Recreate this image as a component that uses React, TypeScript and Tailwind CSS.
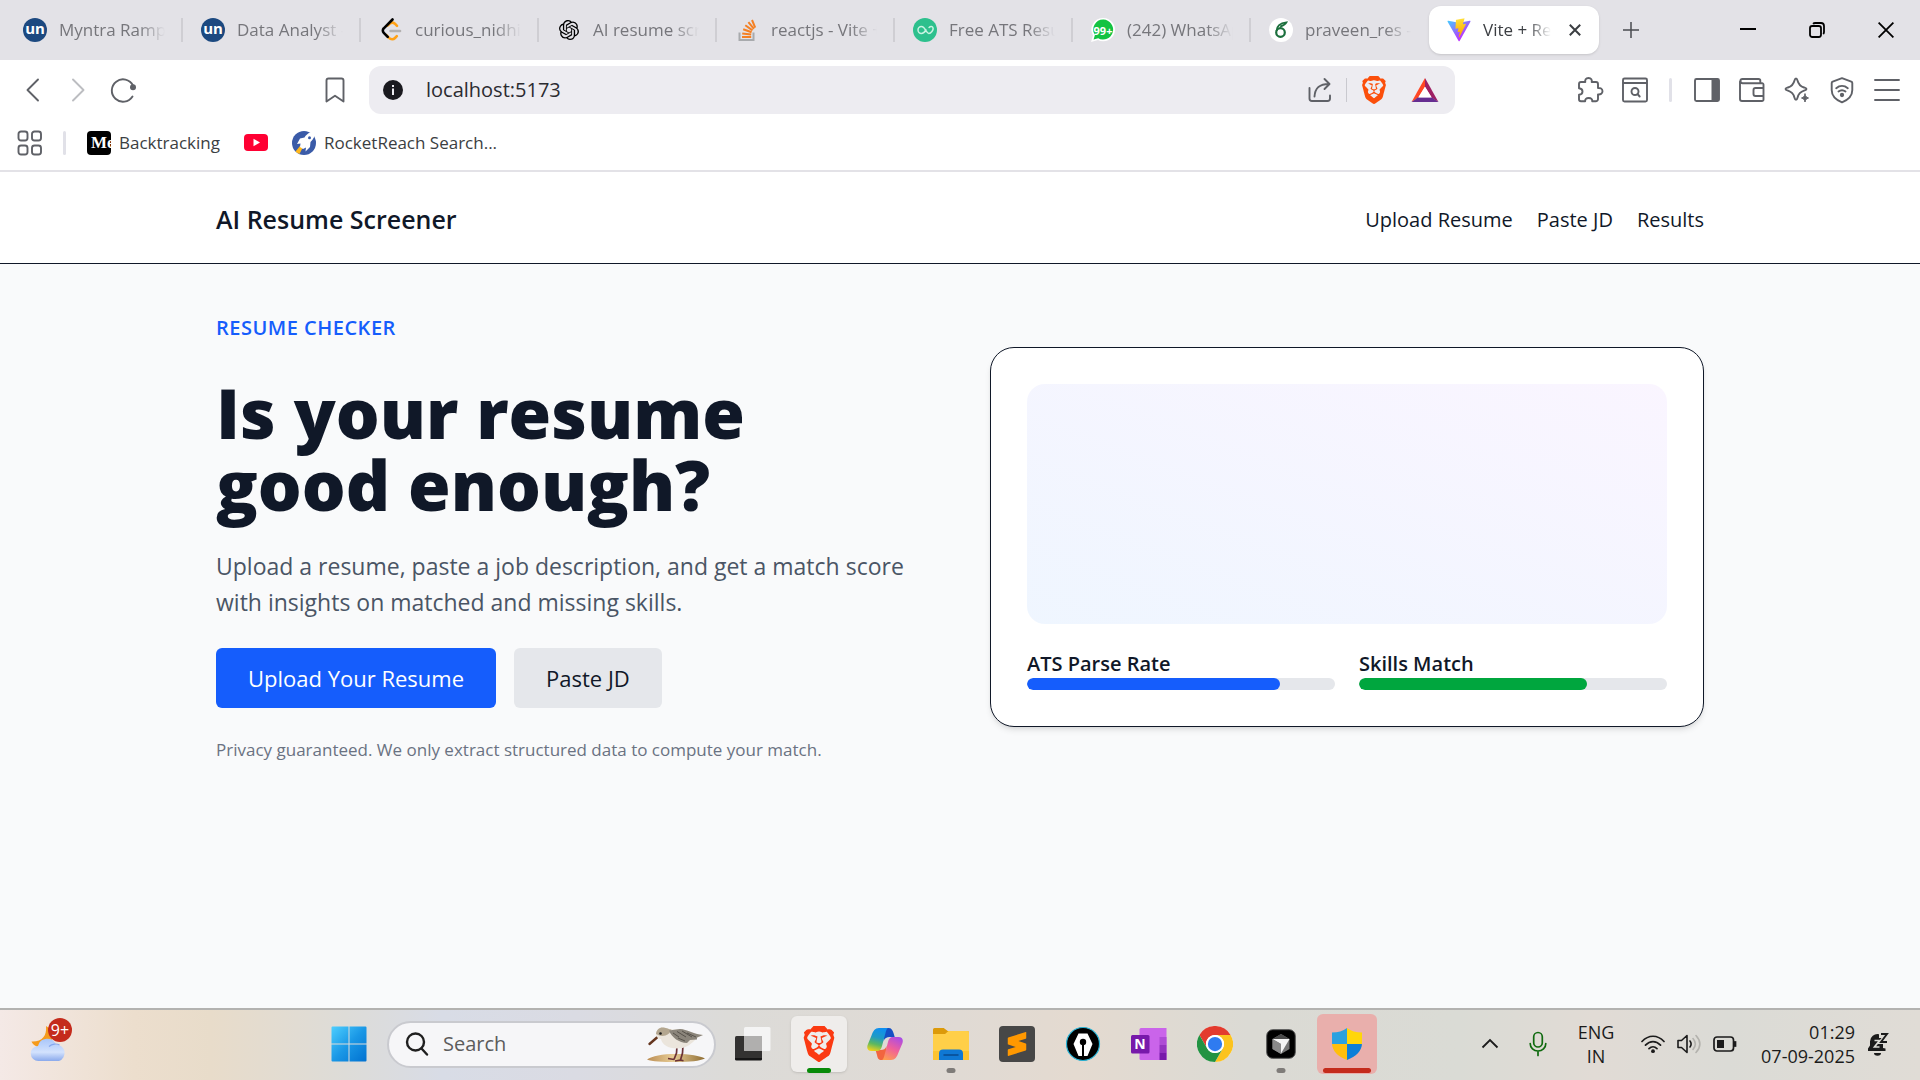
import type { ReactNode } from "react";
import { SiBrave, SiOpenai, SiSublimetext } from "react-icons/si";

/* ---------- favicons ---------- */

const UnIcon = () => (
  <span className="flex size-6 items-center justify-center rounded-full bg-[#1c4980] pb-1 text-[15px] leading-none font-bold text-white">
    un
  </span>
);

const LeetIcon = () => (
  <svg viewBox="0 0 24 24" className="size-6" fill="none" strokeLinecap="round" strokeLinejoin="round">
    <path d="M7.4 17.2l2.6 2.7c1.8 1.7 4.4 1.7 6 .1l1.8-1.8" stroke="#ffa116" strokeWidth="2.6" />
    <path d="M8.6 7.6l2-1.9c1.6-1.2 3.8-1.2 5.300 0l2.100 2.100" stroke="#ffa116" strokeWidth="2.6" />
    <path d="M13.500 1.500L4.800 10.300a3.200 3.200 0 0 0 0 4.600l3.900 4" stroke="#000" strokeWidth="2.600" />
    <path d="M11.500 13h9.500" stroke="#b3b1b0" strokeWidth="2.600" />
  </svg>
);

const StackIcon = () => (
  <svg viewBox="0 0 24 24" className="size-6" fill="none">
    <path d="M4.500 14.500v7.500h14v-7.500" stroke="#a8aaad" strokeWidth="2" />
    <g stroke="#f48024" strokeWidth="2">
      <path d="M7 19h9.200M7.200 15.400l9 1.200M8.200 11.300l8.400 3M10.300 7.300l7.200 5.100M13.400 4.200l5.500 6.600M17 2l3.200 7.600" />
    </g>
  </svg>
);

const EnhancvIcon = () => (
  <svg viewBox="0 0 24 24" className="size-6" fill="none">
    <circle cx="12" cy="12" r="12" fill="#2dc08d" />
    <path
      d="M13 12c-1.200 2-2.400 3.400-4.600 3.400a3.400 3.400 0 0 1 0-6.800c4 0 4.600 6.800 7.400 6.800 2.200 0 4.700-3.400 4.300-5.300-.4-1.800-2.600-2-4-.6"
      stroke="#c9f3e2"
      strokeWidth="1.500"
      strokeLinecap="round"
    />
  </svg>
);

const WhatsIcon = () => (
  <span className="relative flex size-6 items-center justify-center text-[11px] leading-none font-bold text-white">
    <svg viewBox="0 0 24 24" className="absolute inset-0 size-6">
      <path d="M12.400 0a11.600 11.600 0 1 1-5.400 21.900L0 24l2-6.600A11.600 11.600 0 0 1 12.400 0z" fill="#fff" />
      <path d="M12.400 1.600a10 10 0 1 1-5.200 18.700L2.600 21.500l1.300-4.400A10 10 0 0 1 12.400 1.600z" fill="#13c342" />
    </svg>
    <span className="relative">99+</span>
  </span>
);

const OverleafIcon = () => (
  <svg viewBox="0 0 24 24" className="size-6" fill="none">
    <circle cx="12" cy="12" r="12" fill="#fff" />
    <circle cx="11.500" cy="14.500" r="4.300" stroke="#1b6f3d" strokeWidth="2.200" />
    <path d="M7.600 13c.2-5 4-8 9.800-8.600-1 2.200-3.400 3.200-6.200 4.200" stroke="#1b6f3d" strokeWidth="1.900" />
  </svg>
);

const ViteIcon = () => (
  <svg viewBox="0 0 410 404" className="size-6">
    <defs>
      <linearGradient id="viteBody" x1="6" y1="33" x2="235" y2="344" gradientUnits="userSpaceOnUse">
        <stop stopColor="#41D1FF" />
        <stop offset="1" stopColor="#BD34FE" />
      </linearGradient>
      <linearGradient id="viteBolt" x1="194" y1="9" x2="236" y2="293" gradientUnits="userSpaceOnUse">
        <stop stopColor="#FFEA83" />
        <stop offset=".08" stopColor="#FFDD35" />
        <stop offset="1" stopColor="#FFA800" />
      </linearGradient>
    </defs>
    <path
      fill="url(#viteBody)"
      d="M399.641 59.525L215.643 388.545c-3.799 6.793-13.559 6.833-17.415.073L10.582 59.556C6.380 52.190 12.680 43.267 21.028 44.759l184.195 32.924c1.175.21 2.378.208 3.553-.006l180.343-32.870c8.320-1.517 14.649 7.337 10.522 14.719z"
    />
    <path
      fill="url(#viteBolt)"
      d="M292.965 1.574L156.801 28.255a5 5 0 0 0-4.030 4.611l-8.376 141.464c-.197 3.332 2.863 5.918 6.115 5.168l37.910-8.749c3.547-.818 6.752 2.306 6.023 5.873l-11.263 55.153c-.758 3.712 2.727 6.886 6.352 5.785l23.415-7.114c3.630-1.102 7.118 2.081 6.350 5.796l-17.899 86.633c-1.120 5.419 6.088 8.374 9.094 3.728l2.008-3.103 110.954-221.428c1.858-3.707-1.346-7.935-5.418-7.150l-39.022 7.532c-3.667.707-6.787-2.708-5.752-6.296l25.469-88.291c1.036-3.594-2.095-7.012-5.766-6.293z"
    />
  </svg>
);

const tabs: { title: string; icon: ReactNode }[] = [
  { title: "Myntra Ramp Up", icon: <UnIcon /> },
  { title: "Data Analyst - U", icon: <UnIcon /> },
  { title: "curious_nidhi - L", icon: <LeetIcon /> },
  { title: "AI resume screen", icon: <SiOpenai className="size-5 text-black" /> },
  { title: "reactjs - Vite + R", icon: <StackIcon /> },
  { title: "Free ATS Resume", icon: <EnhancvIcon /> },
  { title: "(242) WhatsApp", icon: <WhatsIcon /> },
  { title: "praveen_res - O", icon: <OverleafIcon /> },
];

function TabStrip() {
  return (
    <div className="flex h-[60px] items-center bg-[#e3e2e7] pl-[5px]">
      <div role="tablist" className="flex min-w-0 items-center">
        {tabs.map((t, i) => (
          <button
            key={t.title}
            role="tab"
            aria-selected={false}
            className={
              "flex h-6 w-[178px] items-center gap-3 border-r-2 pr-4 pl-[18px] " +
              (i === tabs.length - 1 ? "border-transparent" : "border-[#cfced3]")
            }
          >
            <span className="flex size-6 shrink-0 items-center justify-center">{t.icon}</span>
            <span className="min-w-0 flex-1 overflow-hidden text-left text-[17px] whitespace-nowrap text-[#76767b] [mask-image:linear-gradient(to_right,black_75%,transparent)]">
              {t.title}
            </span>
          </button>
        ))}
        <div className="flex h-12 w-[170px] items-center rounded-xl bg-white pr-3 pl-[18px] shadow-sm">
          <button role="tab" aria-selected className="flex min-w-0 flex-1 items-center gap-3">
            <ViteIcon />
            <span className="w-[68px] overflow-hidden text-left text-[17px] whitespace-nowrap text-[#3b3e42] [mask-image:linear-gradient(to_right,black_65%,transparent)]">
              Vite + React
            </span>
          </button>
          <button aria-label="Close tab" className="flex size-6 items-center justify-center">
            <svg viewBox="0 0 12 12" className="size-3" stroke="#3b3e42" strokeWidth="2">
              <path d="M.8.8l10.400 10.400M11.200.8L.8 11.200" />
            </svg>
          </button>
        </div>
      </div>
      <button aria-label="New tab" className="ml-5 flex size-6 items-center justify-center">
        <svg viewBox="0 0 16 16" className="size-4" stroke="#4a4b50" strokeWidth="1.500">
          <path d="M8 0v16M0 8h16" />
        </svg>
      </button>
      <div className="ml-auto flex">
        <button aria-label="Minimize" className="flex h-12 w-[69px] items-center justify-center">
          <svg viewBox="0 0 16 16" className="size-4" stroke="#000" strokeWidth="2">
            <path d="M0 7h16" />
          </svg>
        </button>
        <button aria-label="Restore" className="flex h-12 w-[69px] items-center justify-center">
          <svg viewBox="0 0 16 16" className="size-4" fill="none" stroke="#000" strokeWidth="1.800">
            <rect x="1" y="4" width="11" height="11" rx="2.200" />
            <path d="M4 1.800C4.600 1.200 5.400 1 6.200 1H12a3 3 0 0 1 3 3v6c0 .8-.3 1.500-.8 2" />
          </svg>
        </button>
        <button aria-label="Close" className="flex h-12 w-[69px] items-center justify-center">
          <svg viewBox="0 0 16 16" className="size-4" stroke="#000" strokeWidth="1.800">
            <path d="M.6.6l14.800 14.800M15.400.6L.6 15.400" />
          </svg>
        </button>
      </div>
    </div>
  );
}

/* ---------- toolbar ---------- */

function ToolButton({ label, children }: { label: string; children: ReactNode }) {
  return (
    <button aria-label={label} className="flex h-10 w-[45px] items-center justify-center text-[#5f6167]">
      <svg viewBox="0 0 28 28" className="size-7" fill="none" stroke="currentColor" strokeWidth="1.900" strokeLinecap="round" strokeLinejoin="round">
        {children}
      </svg>
    </button>
  );
}

function Toolbar() {
  return (
    <div className="flex h-[60px] items-center bg-white pl-[10px]">
      <ToolButton label="Back">
        <path d="M19 3.500L8.500 14 19 24.500" />
      </ToolButton>
      <button aria-label="Forward" className="flex h-10 w-[45px] items-center justify-center text-[#bcbdc1]">
        <svg viewBox="0 0 28 28" className="size-7" fill="none" stroke="currentColor" strokeWidth="1.900" strokeLinecap="round" strokeLinejoin="round">
          <path d="M9 3.500L19.500 14 9 24.500" />
        </svg>
      </button>
      <ToolButton label="Reload">
        <path d="M24 9.500A11.200 11.200 0 1 0 23.500 20.500" />
        <circle cx="24" cy="11.200" r="3" fill="currentColor" stroke="none" />
      </ToolButton>
      <div className="flex min-w-0 flex-1 items-center justify-end gap-3">
        <ToolButton label="Bookmark this page">
          <path d="M5.500 4.500a2 2 0 0 1 2-2h13a2 2 0 0 1 2 2v21L14 19.800 5.500 25.500z" />
        </ToolButton>
        <div className="flex h-12 w-[1086px] min-w-0 items-center rounded-xl bg-[#edecf1] pr-0.5 pl-[14px]">
          <button aria-label="Site information">
            <svg viewBox="0 0 20 20" className="size-5">
              <circle cx="10" cy="10" r="10" fill="#1a1a1f" />
              <path d="M9 8.500h2V15H9zM9 5h2v2H9z" fill="#edecf1" />
            </svg>
          </button>
          <input
            aria-label="Address"
            defaultValue="localhost:5173"
            className="ml-[23px] min-w-0 flex-1 bg-transparent text-[20px] text-[#2b2b30] outline-none"
          />
          <ToolButton label="Share">
            <path d="M3.500 12v10.500a2.500 2.500 0 0 0 2.500 2.500h15.500a2.500 2.500 0 0 0 2.500-2.500v-3M8.500 20.500c.5-8 4-12.500 14.500-12.500M18.500 3l5 5-5 5" />
          </ToolButton>
          <span className="mx-1 h-6 w-px bg-[#c9c9cf]" />
          <button aria-label="Brave Shields" className="flex h-10 w-[46px] items-center justify-center">
            <SiBrave className="size-7 text-[#fb4f0b]" />
          </button>
          <button aria-label="Brave Rewards" className="flex h-10 w-[56px] items-center justify-center">
            <svg viewBox="0 0 28 25" className="h-6 w-7">
              <path d="M14 0L0 25l7-4.500L14 9z" fill="#ff4724" />
              <path d="M14 0l14 25-7-4.500L14 9z" fill="#9e1f63" />
              <path d="M0 25h28l-7-5H7z" fill="#662d91" />
              <path d="M14 9l7 11.200H7z" fill="#fff" />
            </svg>
          </button>
        </div>
      </div>
      <div className="ml-28 flex items-center pr-[11px]">
        <ToolButton label="Extensions">
          <path d="M3 8a2 2 0 0 1 2-2h4.300c-.5-1.900.4-4 3.200-4s3.700 2.100 3.200 4H20a2 2 0 0 1 2 2v4c2.300-.2 4.500.6 4.500 3.200s-2.200 3.500-4.500 3.200V23a2.200 2.200 0 0 1-2.200 2.200h-3.600c.2-1.900-.9-3.200-3.500-3.200s-3.700 1.300-3.500 3.200H5a2 2 0 0 1-2-2v-4.400c2.200-.2 3.500-1.500 3.500-3.300S5.200 12.400 3 12.200z" />
        </ToolButton>
        <ToolButton label="Search tabs">
          <rect x="2" y="2.500" width="24" height="23" rx="1.500" />
          <path d="M2.500 7h23" />
          <circle cx="14" cy="15.500" r="3.500" />
          <path d="M16.500 18l2.200 2.500" />
        </ToolButton>
        <span className="mx-3 h-6 w-[3px] rounded bg-[#e1e1e8]" />
        <ToolButton label="Sidebar">
          <rect x="2" y="3" width="24" height="22" rx="1.500" />
          <path d="M18.500 3h7.500v22h-7.500z" fill="currentColor" stroke="none" />
        </ToolButton>
        <ToolButton label="Wallet">
          <path d="M2 5.500v17.500A2 2 0 0 0 4 25H24a1.500 1.500 0 0 0 1.500-1.500V9A1.500 1.500 0 0 0 24 7.200H4.500A2.100 2.100 0 0 1 4.500 3H20.500a1.800 1.800 0 0 1 1.800 1.800v2.400M25.500 12h-8a2 2 0 0 0-2 2v4a2 2 0 0 0 2 2h8" />
        </ToolButton>
        <ToolButton label="Leo AI">
          <path d="M13 2.500c1 0 1.200.8 1.500 2 1 4 2.600 5.800 6.500 7 1.400.5 2.500.7 2.500 1.600s-1.100 1.200-2.500 1.600c-3.900 1.200-5.500 3-6.500 7-.3 1.200-.5 2-1.500 2s-1.200-.8-1.500-2c-1-4-2.600-5.800-6.500-7C3.600 14.300 2.500 14 2.500 13.100s1.100-1.100 2.500-1.600c3.900-1.200 5.500-3 6.500-7 .3-1.200.5-2 1.500-2z" />
          <path d="M22 18c.6 2.500 1.200 3.200 3.500 4-2.300.8-2.900 1.500-3.500 4-.6-2.500-1.200-3.200-3.500-4 2.300-.8 2.900-1.500 3.500-4z" fill="currentColor" strokeWidth="1" />
        </ToolButton>
        <ToolButton label="VPN">
          <path d="M14 2.200l9.300 3.400a1.500 1.500 0 0 1 1 1.400v7c0 6-4 9.800-10.300 12.300C7.700 23.800 3.700 20 3.700 14V7a1.500 1.500 0 0 1 1-1.400z" />
          <path d="M8.200 12.200c3.500-3 8.100-3 11.600 0M10.500 15.500c2.300-1.700 4.700-1.700 7 0" />
          <circle cx="14" cy="19" r="1.200" fill="currentColor" />
        </ToolButton>
        <ToolButton label="Menu">
          <path d="M2 4h24M2 14h24M2 24h24" />
        </ToolButton>
      </div>
    </div>
  );
}

function Bookmarks() {
  return (
    <nav aria-label="Bookmarks" className="flex h-[52px] items-center border-b-2 border-[#e3e2e7] bg-white pb-[5px] pl-[17px] text-[17px] text-[#3b3e42]">
      <button aria-label="Apps">
        <svg viewBox="0 0 26 26" className="size-[26px]" fill="none" stroke="#5f6167" strokeWidth="1.900">
          <rect x="1.500" y="1.500" width="9" height="9" rx="2.500" />
          <rect x="15" y="1.500" width="9" height="9" rx="2.500" />
          <rect x="1.500" y="15.500" width="9" height="9" rx="2.500" />
          <rect x="15" y="15.500" width="9" height="9" rx="2.500" />
        </svg>
      </button>
      <span className="mr-[21px] ml-5 h-6 w-[3px] rounded bg-[#e1e1e8]" />
      <a href="#backtracking" className="flex items-center gap-2">
        <span className="flex size-6 items-center overflow-hidden rounded bg-black pl-1 font-['Liberation_Serif',serif] text-[17px] font-bold text-white">
          Me
        </span>
        Backtracking
      </a>
      <a href="#youtube" aria-label="YouTube" className="ml-6">
        <svg viewBox="0 0 24 17" className="h-[17px] w-6">
          <rect width="24" height="17" rx="4" fill="#ff0033" />
          <path d="M9.500 4.800l6.500 3.700-6.500 3.700z" fill="#fff" />
        </svg>
      </a>
      <a href="#rocketreach" className="ml-6 flex items-center gap-2">
        <svg viewBox="0 0 24 24" className="size-6">
          <circle cx="12" cy="12" r="12" fill="#3a5ba8" />
          <path d="M3.500 20.500L8 15l2.500 2L7.500 23A12 12 0 0 1 3.500 20.500z" fill="#ffb81c" />
          <path d="M23.500.5c-5.500.2-8.500 2-11 6L8 7.500 5 13l3.500-.5L8 16l3 2 3-1.500-.5 4L18 16l.5-5c3-3 4.800-6.500 5-10.500z" fill="#fff" />
          <circle cx="17.500" cy="6.800" r="1.500" fill="#3a5ba8" />
        </svg>
        RocketReach Search...
      </a>
    </nav>
  );
}

/* ---------- page ---------- */

function Meter({ label, value, tone }: { label: string; value: number; tone: string }) {
  return (
    <div>
      <p className="text-[20px] leading-7 font-semibold">{label}</p>
      <div
        role="progressbar"
        aria-label={label}
        aria-valuenow={value}
        aria-valuemin={0}
        aria-valuemax={100}
        className="h-3 overflow-hidden rounded-full bg-gray-200"
      >
        <div className={"h-3 rounded-full " + tone} style={{ width: `${value}%` }} />
      </div>
    </div>
  );
}

function Page() {
  return (
    <div className="flex-1 bg-gray-50 text-gray-900">
      <header className="border-b border-gray-900 bg-white">
        <div className="mx-auto flex h-[91px] max-w-[1536px] items-center justify-between px-6 pt-1">
          <a href="#home" className="text-[25px] font-semibold">
            AI Resume Screener
          </a>
          <nav aria-label="Main" className="flex gap-6 text-[20px]">
            <a href="#upload">Upload Resume</a>
            <a href="#jd">Paste JD</a>
            <a href="#results">Results</a>
          </nav>
        </div>
      </header>
      <main className="mx-auto grid max-w-[1536px] grid-cols-2 items-center gap-[60px] px-6 py-12">
        <section>
          <p className="mb-8 text-[20px] leading-8 font-semibold tracking-wide text-[#155dfc]">RESUME CHECKER</p>
          <h1 className="mb-7 text-[69px] leading-[72px] font-extrabold">
            Is your resume
            <br />
            good enough?
          </h1>
          <p className="mb-7 text-[23px] leading-9 text-gray-600">
            Upload a resume, paste a job description, and get a match score with insights on matched and missing skills.
          </p>
          <div className="mb-[30px] flex gap-[18px]">
            <button className="h-[60px] rounded-md bg-[#155dfc] px-8 text-[22px] text-white">
              Upload Your Resume
            </button>
            <button className="h-[60px] rounded-md bg-gray-200 px-8 text-[22px]">Paste JD</button>
          </div>
          <p className="text-[17px] leading-6 text-gray-500">
            Privacy guaranteed. We only extract structured data to compute your match.
          </p>
        </section>
        <section className="rounded-3xl border border-gray-900 bg-white p-9 shadow-md">
          <div className="h-60 rounded-[18px] bg-gradient-to-tr from-blue-50 to-purple-50" />
          <div className="mt-[26px] grid grid-cols-2 gap-6">
            <Meter label="ATS Parse Rate" value={82} tone="bg-[#155dfc]" />
            <Meter label="Skills Match" value={74} tone="bg-[#00a63e]" />
          </div>
        </section>
      </main>
    </div>
  );
}

/* ---------- taskbar ---------- */

const WindowsIcon = () => (
  <svg viewBox="0 0 36 36" className="size-9">
    <defs>
      <linearGradient id="win" x1="0" y1="0" x2="36" y2="36" gradientUnits="userSpaceOnUse">
        <stop stopColor="#4fd0ff" />
        <stop offset=".5" stopColor="#1a98e6" />
        <stop offset="1" stopColor="#0070d0" />
      </linearGradient>
    </defs>
    <path
      fill="url(#win)"
      d="M1.500.5h16v17H.5v-16a1 1 0 0 1 1-1zM18.500.5h16a1 1 0 0 1 1 1v16h-17zM.5 18.500h17v17h-16a1 1 0 0 1-1-1zM18.500 18.500h17v16a1 1 0 0 1-1 1h-16z"
    />
  </svg>
);

const WeatherIcon = () => (
  <svg viewBox="0 0 38 38" className="size-[38px]">
    <defs>
      <linearGradient id="cloud" x1="0" y1="14" x2="0" y2="36" gradientUnits="userSpaceOnUse">
        <stop stopColor="#a9c6fa" />
        <stop offset=".6" stopColor="#d3e2fd" />
        <stop offset="1" stopColor="#8aa9ec" />
      </linearGradient>
    </defs>
    <path d="M16 1c1 10-4 16-14.500 15.500C3 20 7 22.500 12 22c7-.7 11-6 10-12-.5-4-3-7.500-6-9z" fill="#f59b1c" />
    <path d="M8.500 36a7.500 7.500 0 0 1-.5-15 9.500 9.500 0 0 1 18-1.500A8.500 8.500 0 0 1 29 36z" fill="url(#cloud)" />
    <path d="M19 21.500c3-3 8-3 10.500-1.500" stroke="#86a8ee" strokeWidth="1.200" fill="none" />
  </svg>
);

const BirdIcon = () => (
  <svg viewBox="0 0 60 38" className="h-[38px] w-[60px]">
    <defs>
      <linearGradient id="sand" x1="0" y1="0" x2="60" y2="0" gradientUnits="userSpaceOnUse">
        <stop stopColor="#b98a50" />
        <stop offset=".45" stopColor="#e8cd96" />
        <stop offset="1" stopColor="#8c6a30" />
      </linearGradient>
    </defs>
    <path d="M1 34.500C6 31 16 29 30 29s24 2 29 4.500C54 36 44 37 30 37S6 36.500 1 34.500z" fill="url(#sand)" />
    <path d="M31 21l-.5 7L28 34.500M37 20l-.5 8-2 7M22 33.500l6 1M29 36l5.500-1 3 .8" stroke="#6b3236" strokeWidth="1.700" fill="none" />
    <path d="M11 12.500L3.500 19" stroke="#65361f" strokeWidth="2.400" strokeLinecap="round" />
    <path d="M10 9c.5-4.500 3.500-7 7.500-6.500 3.500.3 5 2 8 2L34 4c7 .5 13 5 23 6l-6 3-3 3c-4 4-9 7.500-17 7.500-9 0-15-4-16-9.500-2.500.2-4.500-1.500-5-5z" fill="#ebe5dc" />
    <path d="M10 9c.5-4.500 3.500-7 7.500-6.500 3.500.3 5 2 8 2-1 3-3 5-6 6s-6 .5-9.500-1.500z" fill="#b3a68f" />
    <path d="M23 5.500L34 4c7 .5 13 5 23 6l-6 2.500 0 2-7 .5-3 3c-8-.5-15-5-18-12.500z" fill="#8b857b" />
    <path d="M27 8l6 4M31 6.500l9 5.500M36 6l10 6M32 13l7 3M41 8l9 4" stroke="#57524b" strokeWidth="1" />
    <circle cx="14.500" cy="8.500" r="1.300" fill="#1a1a1a" />
  </svg>
);

const TaskViewIcon = () => (
  <svg viewBox="0 0 36 36" className="size-9">
    <rect x="0" y="10" width="27" height="24" rx="1.500" fill="#333231" />
    <path d="M0 32h27v1a1.500 1.500 0 0 1-1.500 1.500h-24A1.500 1.500 0 0 1 0 33z" fill="#151515" />
    <rect x="9" y="1" width="26.500" height="24" rx="1.500" fill="#f4f4f4" />
    <path d="M9 10h18v15H10.500A1.500 1.500 0 0 1 9 23.500z" fill="#b0afae" />
  </svg>
);

const CopilotIcon = () => (
  <svg viewBox="0 0 36 34" className="h-[34px] w-9">
    <defs>
      <linearGradient id="cpA" x1="12" y1="1" x2="6" y2="24" gradientUnits="userSpaceOnUse">
        <stop stopColor="#0f8ff0" />
        <stop offset=".4" stopColor="#1f9bc4" />
        <stop offset=".7" stopColor="#5cb860" />
        <stop offset="1" stopColor="#f0d21c" />
      </linearGradient>
      <linearGradient id="cpB" x1="30" y1="9" x2="18" y2="33" gradientUnits="userSpaceOnUse">
        <stop stopColor="#a84be8" />
        <stop offset=".5" stopColor="#f0609a" />
        <stop offset="1" stopColor="#ffa04d" />
      </linearGradient>
    </defs>
    <path d="M17 1h4.500c3 0 4 2 5 5l1.200 4h-5c-3 0-5 1-6 4z" fill="#154fc4" />
    <path d="M19 33h-4.500c-3 0-4-2-4.500-5l-1.500-5h5c3 0 5-1 6-4z" fill="#f2653f" />
    <path d="M21 1H12C8 1 6 4 4.500 8.500L.6 18C-.5 22 1 24 4.500 24H10c3 0 4-1.500 5-5l3.500-13C19.200 3 20 1.300 21 1z" fill="url(#cpA)" />
    <path d="M15 33h9c4 0 6-3 7.500-7.500l4-9.500c1-4-.5-6-4-6H26c-3 0-4 1.500-5 5l-3.500 13c-.7 3-1.500 4.700-2.500 5z" fill="url(#cpB)" />
  </svg>
);

const FolderIcon = () => (
  <svg viewBox="0 0 36 34" className="h-[34px] w-9">
    <path d="M0 2.500A1.500 1.500 0 0 1 1.500 1h9.200l4 3H34.500A1.500 1.500 0 0 1 36 5.500V15H0z" fill="#dc9a0a" />
    <path d="M0 7h12l3.500-3H34.500A1.500 1.500 0 0 1 36 5.500V33H0z" fill="#ffcf48" />
    <path d="M0 24h36v9H0z" fill="#fdc32f" />
    <path d="M6 33v-6.500A4 4 0 0 1 10 22.500h16a4 4 0 0 1 4 4V33z" fill="#0f78d4" />
    <path d="M11 28h14" stroke="#084a8f" strokeWidth="1.500" strokeLinecap="round" />
  </svg>
);

const SublimeIcon = () => (
  <span className="flex size-9 items-center justify-center rounded-sm bg-[#474747]">
    <SiSublimetext className="size-6 text-[#ff9800]" />
  </span>
);

const PenIcon = () => (
  <svg viewBox="0 0 36 36" className="size-9">
    <circle cx="18" cy="18" r="16.500" fill="#000" stroke="#27b3d6" strokeWidth="1.200" />
    <path d="M13.500 7.500h9L27.500 18l-5 12H19V18.500h-2V30h-3.500L8.500 18z" fill="#fff" />
    <circle cx="18" cy="16" r="3.200" fill="#000" />
    <path d="M18 16v15" stroke="#000" strokeWidth="1.600" />
  </svg>
);

const OneNoteIcon = () => (
  <span className="relative flex size-9 items-center">
    <svg viewBox="0 0 36 36" className="absolute inset-0 size-9">
      <path d="M8.500 3.500A1.500 1.500 0 0 1 10 2h25.500v32H10a1.500 1.500 0 0 1-1.500-1.500z" fill="#ca64ea" />
      <path d="M28.500 11h7v8h-7z" fill="#ae4bd5" />
      <path d="M28.500 19h7v7.500h-7z" fill="#9332bf" />
      <path d="M28.500 26.500h7V34h-7z" fill="#7719aa" />
      <rect x="0" y="9" width="18.500" height="18.500" rx="1.500" fill="#7719aa" />
    </svg>
    <span className="relative w-[18px] text-center text-[14px] leading-none font-bold text-white">N</span>
  </span>
);

const ChromeIcon = () => (
  <svg viewBox="0 0 48 48" className="size-9">
    <circle cx="24" cy="24" r="24" fill="#fff" />
    <path d="M3.200 12A24 24 0 0 1 44.800 12H24a12 12 0 0 0-10.400 18z" fill="#e33b2e" />
    <path d="M44.800 12A24 24 0 0 1 24 48l10.400-18A12 12 0 0 0 24 12z" fill="#fcc31e" />
    <path d="M24 48A24 24 0 0 1 3.200 12l10.400 18a12 12 0 0 0 20.800 0z" fill="#229342" />
    <circle cx="24" cy="24" r="12" fill="#fff" />
    <circle cx="24" cy="24" r="9.500" fill="#2f7bf0" />
  </svg>
);

const CursorIcon = () => (
  <svg viewBox="0 0 30 30" className="size-[30px]">
    <rect x=".7" y=".7" width="28.600" height="28.600" rx="6" fill="#000" stroke="#555" strokeWidth="1" />
    <path d="M15 5l8.500 5v10L15 25l-8.500-5V10z" fill="#777" />
    <path d="M15 5l8.500 5h-17z" fill="#4a4a4a" />
    <path d="M6.500 10h17L15 24.500V15z" fill="#f5f5f5" />
    <path d="M6.500 10L15 15v10l-8.500-5z" fill="#8a8a8a" />
  </svg>
);

const ShieldIcon = () => (
  <svg viewBox="0 0 32 34" className="h-[34px] w-8">
    <defs>
      <clipPath id="uac">
        <path d="M16 1c4 3 9 4.500 15 4.500V16c0 8-6 13.500-15 17C7 29.500 1 24 1 16V5.500C7 5.500 12 4 16 1z" />
      </clipPath>
    </defs>
    <g clipPath="url(#uac)">
      <path d="M0 0h16v17H0z" fill="#2aa1e0" />
      <path d="M16 0h16v17H16z" fill="#ffd60a" />
      <path d="M0 17h16v17H0z" fill="#ffbf0d" />
      <path d="M16 17h16v17H16z" fill="#0d7fd8" />
    </g>
  </svg>
);

const BraveIcon = () => <SiBrave className="size-9 text-[#fb3a12]" />;

const apps: { name: string; icon: ReactNode; tile?: string; mark?: string }[] = [
  { name: "Task view", icon: <TaskViewIcon /> },
  { name: "Brave", icon: <BraveIcon />, tile: "size-14 bg-[#efedeb] shadow-sm", mark: "w-6 bg-[#088a08]" },
  { name: "Copilot", icon: <CopilotIcon /> },
  { name: "File Explorer", icon: <FolderIcon />, mark: "w-[9px] bg-[#7f7c79]" },
  { name: "Sublime Text", icon: <SublimeIcon /> },
  { name: "Pen", icon: <PenIcon /> },
  { name: "OneNote", icon: <OneNoteIcon /> },
  { name: "Chrome", icon: <ChromeIcon /> },
  { name: "Cursor", icon: <CursorIcon />, mark: "w-[9px] bg-[#7f7c79]" },
  { name: "Windows Security", icon: <ShieldIcon />, tile: "size-[60px] bg-[#e9afac]", mark: "w-12 bg-[#c42b1c]" },
];

function Taskbar() {
  return (
    <footer className="flex h-[72px] items-center border-t-2 border-[#b3b2b0] bg-[linear-gradient(to_right,#f4e9e6_0%,#ecdecd_7%,#e8dcca_11%,#dddcd8_18%,#d8dce6_23%,#dadbe3_30%,#dcdbd8_38%,#e0dad4_50%,#e4dad0_56%,#dbdad4_65%,#dadbd5_76%,#e1dbd5_83%,#dbdbd6_90%,#e0dcd6_100%)] pb-0.5 text-[#1b1b1b]">
      <button aria-label="Weather, 9 new" className="relative ml-[30px] flex size-11 items-center">
        <WeatherIcon />
        <span className="absolute -top-1 left-[18px] flex size-6 items-center justify-center rounded-full bg-[#c42b1c] text-[16px] leading-none text-white">
          9+
        </span>
      </button>
      <div className="ml-[257px] flex items-center">
        <button aria-label="Start">
          <WindowsIcon />
        </button>
        <label className="ml-5 flex h-[47px] w-[329px] items-center rounded-full border-2 border-[#c9cacf] bg-[#f6f6f8] pr-2 pl-4">
          <svg viewBox="0 0 24 24" className="size-6" fill="none" stroke="#1f1f1f" strokeWidth="2.400" strokeLinecap="round">
            <circle cx="10.500" cy="10" r="8.500" />
            <path d="M16.500 16.500l5.500 6" />
          </svg>
          <input
            aria-label="Search"
            placeholder="Search"
            className="ml-[14px] w-0 flex-1 bg-transparent text-[20px] outline-none placeholder:text-[#5c5c5c]"
          />
          <BirdIcon />
        </label>
        <div className="ml-1 flex">
          {apps.map((a) => (
            <button key={a.name} aria-label={a.name} className="relative flex h-[60px] w-[66px] items-center justify-center">
              <span className={"flex items-center justify-center rounded-md " + (a.tile ?? "")}>{a.icon}</span>
              {a.mark && (
                <span className={"absolute bottom-[1px] left-1/2 h-[5px] -translate-x-1/2 rounded-full " + a.mark} />
              )}
            </button>
          ))}
        </div>
      </div>
      <div className="ml-auto flex items-center pr-[30px] text-[18px] leading-6">
        <button aria-label="Show hidden icons" className="mr-[30px]">
          <svg viewBox="0 0 18 18" className="size-[18px]" fill="none" stroke="#1b1b1b" strokeWidth="1.800">
            <path d="M1.500 12.500L9 5l7.500 7.500" />
          </svg>
        </button>
        <button aria-label="Microphone in use" className="mr-6">
          <svg viewBox="0 0 18 26" className="h-[26px] w-[18px]" fill="none" stroke="#0f6a0f" strokeWidth="1.700" strokeLinecap="round">
            <rect x="4.700" y="1.500" width="8.600" height="14.500" rx="4.300" />
            <path d="M1.200 12.500c0 4.500 3.500 7.500 7.800 7.500s7.800-3 7.800-7.500M9 20v4.500" />
          </svg>
        </button>
        <button className="mr-5 w-[50px] text-center">
          ENG
          <br />
          IN
        </button>
        <button aria-label="Network, volume, battery" className="mr-6 flex items-center gap-3">
          <svg viewBox="0 0 24 20" className="h-5 w-6" fill="none" stroke="#1b1b1b" strokeWidth="1.700" strokeLinecap="round">
            <path d="M1 7.500c6.500-7 15.500-7 22 0M4.500 11.200c4.500-4.700 10.500-4.700 15 0M8 14.600c2.500-2.500 5.500-2.500 8 0" />
            <circle cx="12" cy="17.200" r="1.900" fill="#1b1b1b" stroke="none" />
          </svg>
          <svg viewBox="0 0 24 20" className="h-5 w-6" fill="none" stroke="#1b1b1b" strokeWidth="1.600" strokeLinecap="round" strokeLinejoin="round">
            <path d="M1 6.500v7h3.500L10 18.500v-17L4.500 6.500zM13 7c1.500 2 1.500 4 0 6" />
            <path d="M16 4.500c3 3.500 3 7.500 0 11M19 1.500c5 5.500 5 11.500 0 17" stroke="#b3b2ad" />
          </svg>
          <svg viewBox="0 0 24 18" className="h-[18px] w-6" fill="none" stroke="#1b1b1b" strokeWidth="1.700">
            <rect x="1" y="2" width="19.500" height="14" rx="3" />
            <path d="M21 7h1.500v4H21z" fill="#1b1b1b" />
            <path d="M4 5h7v8H4z" fill="#1b1b1b" stroke="none" />
          </svg>
        </button>
        <button className="mr-[11px] text-right">
          01:29
          <br />
          07-09-2025
        </button>
        <button aria-label="Notifications, do not disturb">
          <svg viewBox="0 0 24 24" className="size-6">
            <path d="M2 16.500l2-3V9.500A7.500 7.500 0 0 1 13 2.200V6h4v10l2.500.5V19H2z" fill="#1b1b1b" />
            <path d="M8 21h7a3.500 2.800 0 0 1-7 0z" fill="#1b1b1b" />
            <path d="M8.500 8.500h5l-5 6.500h5" stroke="#dcdbd6" strokeWidth="1.700" fill="none" />
            <path d="M15 2h6l-6 8h6" stroke="#dcdbd6" strokeWidth="4" fill="none" />
            <path d="M15 2h6l-6 8h6" stroke="#1b1b1b" strokeWidth="1.900" fill="none" />
          </svg>
        </button>
      </div>
    </footer>
  );
}

export default function App() {
  return (
    <div className="flex min-h-screen flex-col font-['Open_Sans','Noto_Sans',sans-serif]">
      <TabStrip />
      <Toolbar />
      <Bookmarks />
      <Page />
      <Taskbar />
    </div>
  );
}
